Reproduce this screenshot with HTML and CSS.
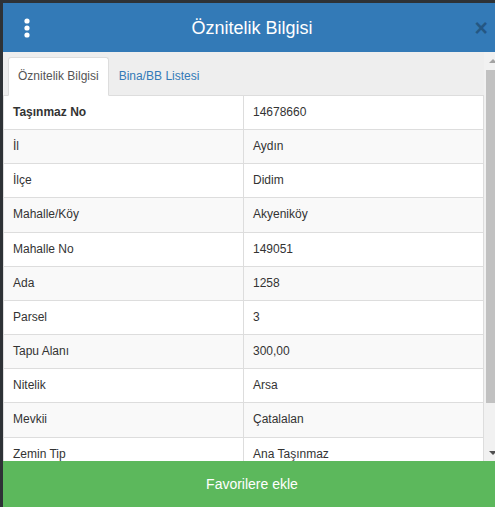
FILE: index.html
```html
<!DOCTYPE html>
<html>
<head>
  <title>Öznitelik Bilgisi</title>
  <meta name="viewport" content="width=device-width, initial-scale=1.0">
  <link rel="stylesheet" href="styles.css">
</head>
<body>

  <div class="dialog">
    <div class="header">
      <span class="menu">
        <svg width="8" height="20" viewBox="0 0 8 20">
          <circle cx="4" cy="3" r="2.6" fill="#fff"/>
          <circle cx="4" cy="10" r="2.6" fill="#fff"/>
          <circle cx="4" cy="17" r="2.6" fill="#fff"/>
        </svg>
      </span>
      <h1>Öznitelik Bilgisi</h1>
      <span class="close">&times;</span>
    </div>

    <div class="main">
      <div class="content">
        <ul class="tabs">
          <li class="active">Öznitelik Bilgisi</li>
          <li>Bina/BB Listesi</li>
        </ul>
        <table class="info">
          <tr><th>Taşınmaz No</th><td>14678660</td></tr>
          <tr><td>İl</td><td>Aydın</td></tr>
          <tr><td>İlçe</td><td>Didim</td></tr>
          <tr><td>Mahalle/Köy</td><td>Akyeniköy</td></tr>
          <tr><td>Mahalle No</td><td>149051</td></tr>
          <tr><td>Ada</td><td>1258</td></tr>
          <tr><td>Parsel</td><td>3</td></tr>
          <tr><td>Tapu Alanı</td><td>300,00</td></tr>
          <tr><td>Nitelik</td><td>Arsa</td></tr>
          <tr><td>Mevkii</td><td>Çatalalan</td></tr>
          <tr><td>Zemin Tip</td><td>Ana Taşınmaz</td></tr>
        </table>
      </div>
      <div class="scrollbar">
        <span class="arrow up"></span>
        <span class="thumb"></span>
        <span class="track"></span>
        <span class="arrow down"></span>
      </div>
    </div>

    <button class="fav">Favorilere ekle</button>
  </div>

</body>
</html>
```

FILE: styles.css
```css
body {
  margin: 0;
  background: #2e3236;
  font-family: "Liberation Sans", Arial, sans-serif;
  font-size: 12px;
  line-height: 17px;
  color: #333;
  overflow: hidden;
  height: 507px;
}
.dialog {
  margin: 3px 0 0 3px;
  width: 498px;
  height: 504px;
  background: #eee;
  display: flex;
  flex-direction: column;
}
.header {
  height: 49px;
  flex: none;
  background: #337ab7;
  display: grid;
  grid-template-columns: 1fr auto 1fr;
  align-items: center;
}
.menu {
  padding-left: 20px;
  display: flex;
}
.header h1 {
  margin: 0;
  color: #fff;
  font-size: 18px;
  font-weight: normal;
  line-height: 20px;
}
.close {
  justify-self: end;
  padding-right: 13px;
  font-size: 23px;
  font-weight: bold;
  color: #000;
  opacity: 0.28;
  line-height: 20px;
}
.main {
  height: 409px;
  flex: none;
  display: flex;
}
.content {
  flex: 1;
  overflow: hidden;
  padding-top: 5px;
}
.tabs {
  list-style: none;
  margin: 0;
  padding: 0 0 0 5px;
  display: flex;
  border-bottom: 1px solid #ddd;
}
.tabs li {
  padding: 10px 9px;
  border: 1px solid transparent;
  border-radius: 3px 3px 0 0;
  color: #337ab7;
  margin-bottom: -1px;
}
.tabs li.active {
  background: #fff;
  color: #555;
  border-color: #ddd;
  border-bottom-color: #fff;
}
.info {
  width: 100%;
  border-collapse: collapse;
  background: #fff;
  table-layout: fixed;
}
.info th, .info td {
  padding: 8px 8px 8px 9px;
  border: 1px solid #ddd;
  text-align: left;
  line-height: 17.15px;
}
.info tr:first-child th, .info tr:first-child td {
  border-top: 0;
}
.info tr:nth-child(even) {
  background: #f9f9f9;
}
.scrollbar {
  width: 17px;
  flex: none;
  background: #f1f1f1;
  display: flex;
  flex-direction: column;
}
.arrow {
  height: 17px;
  flex: none;
  display: flex;
  align-items: center;
  justify-content: center;
}
.arrow::before {
  content: "";
  border-left: 4px solid transparent;
  border-right: 4px solid transparent;
}
.arrow.up::before {
  border-bottom: 4px solid #a3a3a3;
}
.arrow.down::before {
  border-top: 4px solid #505050;
}
.thumb {
  height: 333px;
  margin: 1px 2px 0;
  background: #c1c1c1;
}
.track {
  flex: 1;
}
.fav {
  height: 46px;
  flex: none;
  border: none;
  background: #5cb85c;
  color: #fff;
  font-family: "Liberation Sans", Arial, sans-serif;
  font-size: 14px;
  width: 100%;
  padding: 0;
}
```
